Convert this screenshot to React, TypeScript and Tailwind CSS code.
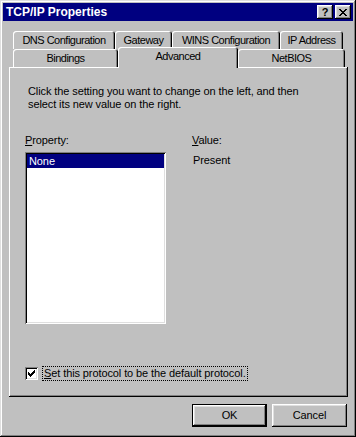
import React from "react"

const raised =
  "shadow-[inset_-1px_-1px_#000,inset_1px_1px_#fff,inset_-2px_-2px_#808080,inset_2px_2px_#dfdfdf]"

function Tab({ label, className }: { label: string; className: string }) {
  return (
    <div
      className={`flex items-center justify-center rounded-t-[3px] bg-[#c0c0c0] tracking-[-0.5px] shadow-[inset_1px_1px_#fff,inset_-1px_0_#000,inset_-2px_0_#808080] ${className}`}
    >
      {label}
    </div>
  )
}

function CaptionButton({ children }: { children: React.ReactNode }) {
  return (
    <div className={`flex h-[14px] w-[16px] items-center justify-center bg-[#c0c0c0] text-black ${raised}`}>
      {children}
    </div>
  )
}

export default function App() {
  return (
    <div
      className={`flex h-[437px] w-[356px] flex-col bg-[#c0c0c0] p-[3px] font-['Liberation_Sans',Arial,sans-serif] text-[11px] tracking-[-0.1px] text-black shadow-[inset_-1px_-1px_#000,inset_1px_1px_#dfdfdf,inset_-2px_-2px_#808080,inset_2px_2px_#fff]`}
    >
      {/* title bar */}
      <div className="flex h-[18px] items-center justify-between bg-[#000080] pl-[3px] pr-[2px]">
        <span className="text-[12px] font-bold tracking-normal text-white">TCP/IP Properties</span>
        <div className="flex gap-[2px]">
          <CaptionButton>
            <span className="text-[11px] font-bold leading-none">?</span>
          </CaptionButton>
          <CaptionButton>
            <svg width="8" height="7" viewBox="0 0 8 7" shapeRendering="crispEdges">
              <path d="M0 0h2v1H0zM6 0h2v1H6zM1 1h2v1H1zM5 1h2v1H5zM2 2h4v1H2zM3 3h2v1H3zM2 4h4v1H2zM1 5h2v1H1zM5 5h2v1H5zM0 6h2v1H0zM6 6h2v1H6z" fill="#000" />
            </svg>
          </CaptionButton>
        </div>
      </div>

      {/* tabs + page */}
      <div className="ml-[6px] mt-[10px] flex flex-col">
        <div className="flex h-[18px] pl-[4px]">
          <Tab label="DNS Configuration" className="h-[18px] w-[102px]" />
          <Tab label="Gateway" className="h-[18px] w-[57px]" />
          <Tab label="WINS Configuration" className="h-[18px] w-[108px]" />
          <Tab label="IP Address" className="h-[18px] w-[63px]" />
        </div>
        <div className="-mt-[2px] flex h-[20px] items-end pl-[4px]">
          <Tab label="Bindings" className="h-[18px] w-[105px]" />
          <Tab label="Advanced" className="relative z-10 -mb-[1px] h-[21px] w-[120px] pb-[3px]" />
          <Tab label="NetBIOS" className="h-[18px] w-[107px]" />
        </div>

        <div
          className={`flex h-[330px] w-[339px] flex-col pl-[16px] pt-[18px] shadow-[inset_-1px_-1px_#000,inset_1px_1px_#fff,inset_-2px_-2px_#808080]`}
        >
          <p className="ml-[3px] leading-[13px]">
            Click the setting you want to change on the left, and then
            <br />
            select its new value on the right.
          </p>

          <div className="mt-[23px] flex">
            <div className="flex flex-col">
              <span className="leading-[13px]">
                <span className="underline">P</span>roperty:
              </span>
              <div className="mt-[5px] h-[172px] w-[141px] bg-white p-[2px] shadow-[inset_1px_1px_#808080,inset_-1px_-1px_#fff,inset_2px_2px_#000,inset_-2px_-2px_#dfdfdf]">
                <div className="h-[14px] bg-[#000080] pl-[2px] leading-[14px] text-white">None</div>
              </div>
            </div>
            <div className="ml-[26px] flex flex-col">
              <span className="leading-[13px]">
                <span className="underline">V</span>alue:
              </span>
              <span className="ml-[1px] mt-[7px] leading-[13px]">Present</span>
            </div>
          </div>

          <div className="mt-[42px] flex items-center">
            <div className="flex h-[13px] w-[13px] items-center justify-center bg-white shadow-[inset_1px_1px_#808080,inset_-1px_-1px_#fff,inset_2px_2px_#000,inset_-2px_-2px_#dfdfdf]">
              <svg width="7" height="7" viewBox="0 0 7 7" shapeRendering="crispEdges">
                <path d="M6 0h1v3H6zM5 1h1v3H5zM4 2h1v3H4zM3 3h1v3H3zM2 4h1v3H2zM1 3h1v3H1zM0 2h1v3H0z" fill="#000" />
              </svg>
            </div>
            <span className="ml-[4px] border border-dotted border-black px-[1px] leading-[13px]">
              <span className="underline">S</span>et this protocol to be the default protocol.
            </span>
          </div>
        </div>
      </div>

      {/* buttons */}
      <div className="mt-[7px] flex justify-end gap-[5px] pr-[6px]">
        <div className="h-[23px] w-[75px] border border-black">
          <div className={`flex h-full w-full items-center justify-center ${raised}`}>OK</div>
        </div>
        <div className={`flex h-[23px] w-[75px] items-center justify-center ${raised}`}>Cancel</div>
      </div>
    </div>
  )
}
